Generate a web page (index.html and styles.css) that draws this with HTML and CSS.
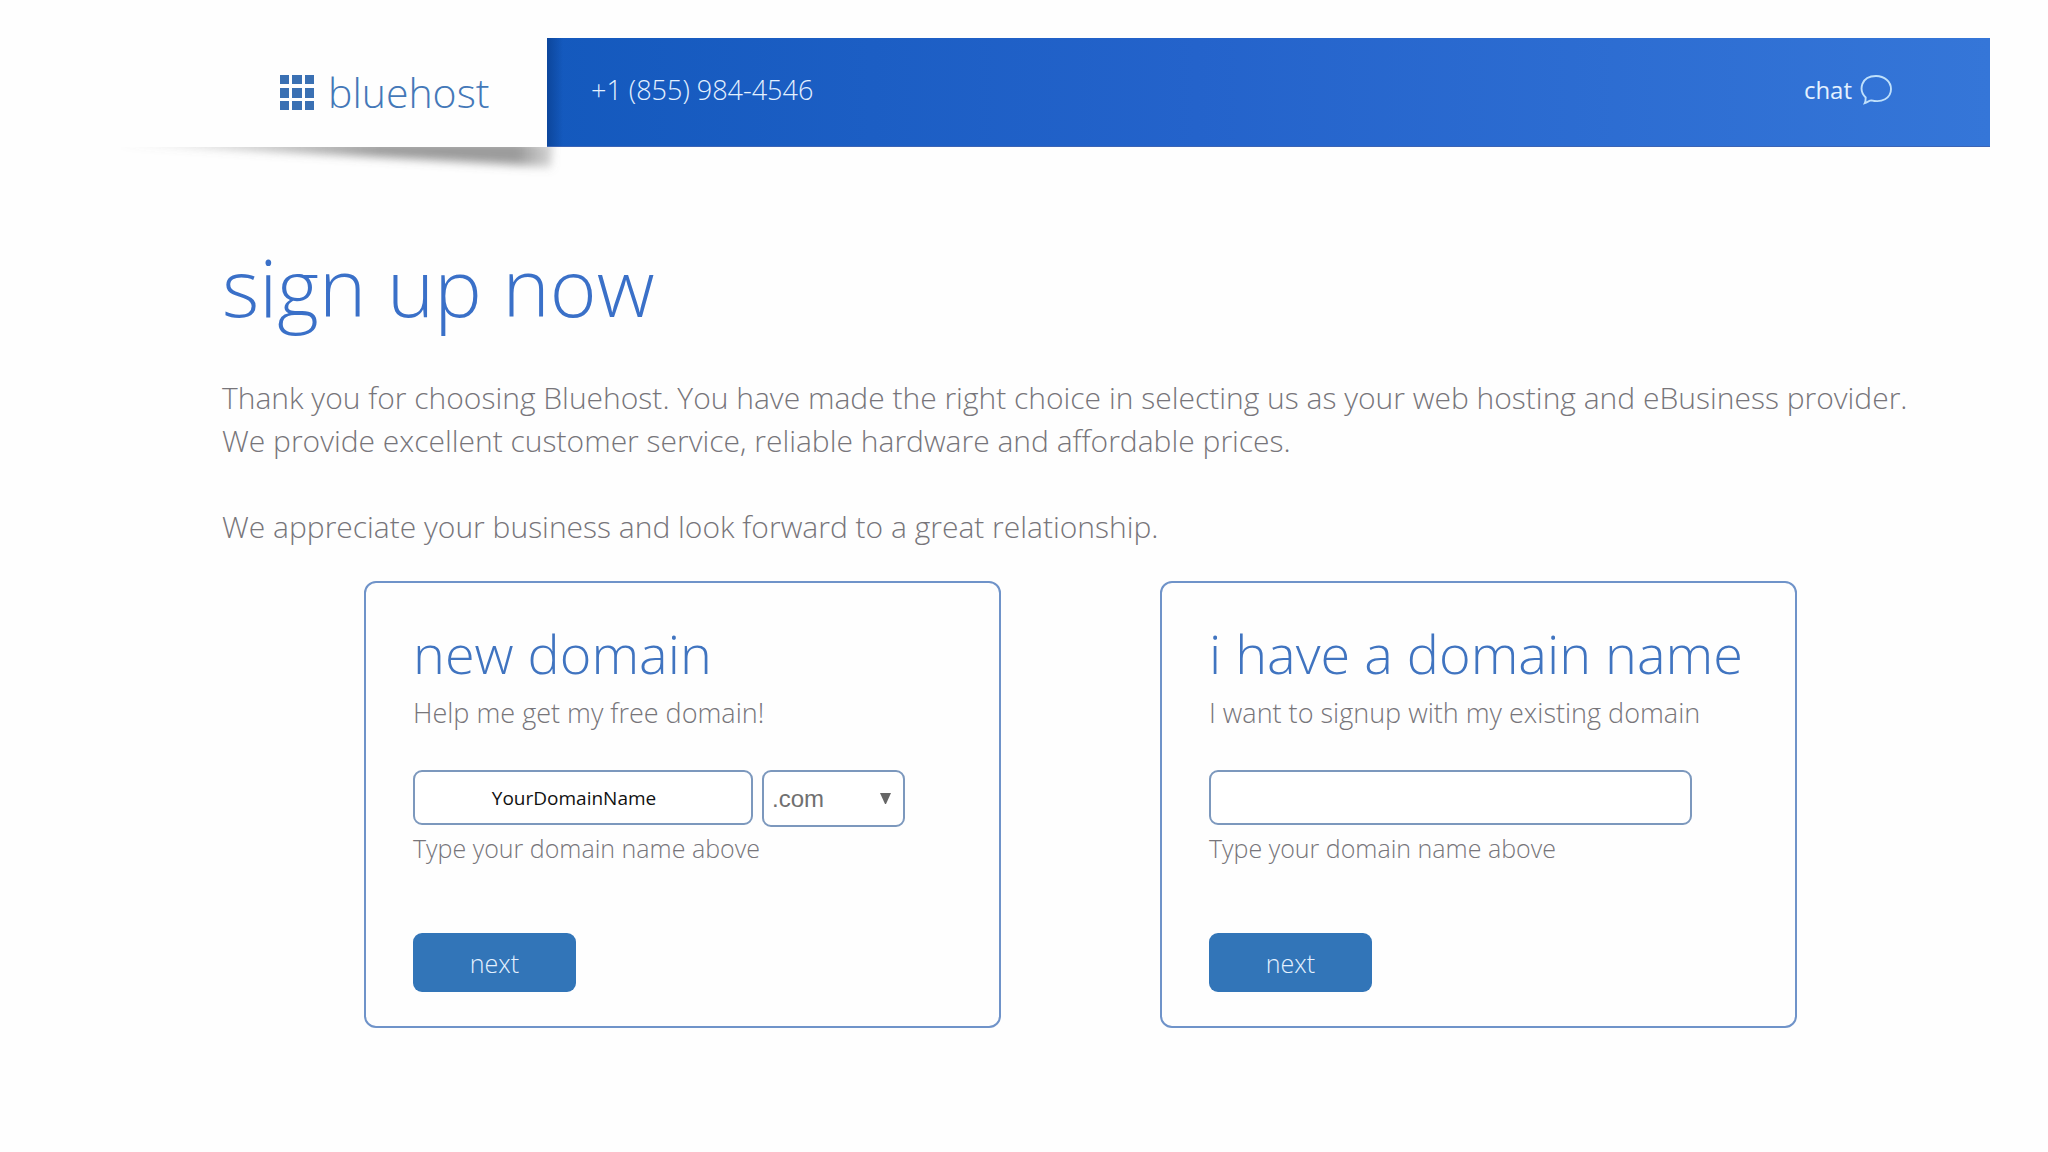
FILE: index.html
```html
<!DOCTYPE html>
<html lang="en">
<head>
<meta charset="utf-8">
<title>Bluehost - sign up now</title>
<meta name="viewport" content="width=device-width, initial-scale=1">
<link rel="stylesheet" href="styles.css">
</head>
<body>
<header class="site-header">
  <div class="brand">
    <a class="logo" href="#">
      <svg class="logo-grid" viewBox="0 0 34 35" aria-hidden="true">
        <path d="M0 0h9v9H0zM12 0h10v9H12zM25 0h9v9h-9zM0 13h9v10H0zM12 13h10v10H12zM25 13h9v10h-9zM0 26h9v9H0zM12 26h10v9H12zM25 26h9v9h-9z"/>
      </svg>
      <span class="logo-name">bluehost</span>
    </a>
    <svg class="brand-shadow" viewBox="0 0 440 36" preserveAspectRatio="none" aria-hidden="true">
      <defs>
        <linearGradient id="fade-x" x1="0" x2="1" y1="0" y2="0">
          <stop offset="0" stop-color="#777" stop-opacity="0.2"/>
          <stop offset="0.6" stop-color="#666" stop-opacity="0.65"/>
          <stop offset="0.92" stop-color="#666" stop-opacity="0.65"/>
          <stop offset="1" stop-color="#777" stop-opacity="0.3"/>
        </linearGradient>
        <filter id="soften" x="-10%" y="-50%" width="120%" height="200%">
          <feGaussianBlur stdDeviation="4 5"/>
        </filter>
      </defs>
      <path d="M-6 -5H432L430 20Z" fill="url(#fade-x)" filter="url(#soften)"/>
    </svg>
  </div>
  <div class="top-bar">
    <a class="phone" href="tel:+18559844546">+1 (855) 984-4546</a>
    <a class="chat" href="#">chat
      <svg class="chat-icon" viewBox="0 0 34 32" aria-hidden="true">
        <path d="M5 30C6 28 6 26 6 24C-2 16 1 1 17 1C26 1 33 7 33 15C33 25 23 30 12 27C10 27 8 29 5 30Z"/>
      </svg>
    </a>
  </div>
</header>
<main class="page">
  <h1 class="page-title">sign up now</h1>
  <div class="intro">
    <p>Thank you for choosing Bluehost. You have made the right choice in selecting us as your web hosting and eBusiness provider.<br>We provide excellent customer service, reliable hardware and affordable prices.</p>
    <p>We appreciate your business and look forward to a great relationship.</p>
  </div>
  <div class="cards">
    <form class="card">
      <h2 class="card-title">new domain</h2>
      <p class="card-lead">Help me get my free domain!</p>
      <div class="fields">
        <input class="field field-name" id="new-domain" type="text" value="YourDomainName">
        <select class="field field-tld" aria-label="Domain ending">
          <option>.com</option>
          <option>.net</option>
          <option>.org</option>
        </select>
      </div>
      <label class="hint" for="new-domain">Type your domain name above</label>
      <button class="next" type="button">next</button>
    </form>
    <form class="card">
      <h2 class="card-title">i have a domain name</h2>
      <p class="card-lead">I want to signup with my existing domain</p>
      <div class="fields">
        <input class="field field-existing" id="own-domain" type="text">
      </div>
      <label class="hint" for="own-domain">Type your domain name above</label>
      <button class="next" type="button">next</button>
    </form>
  </div>
</main>
</body>
</html>
```
FILE: styles.css
```css
* {
  box-sizing: border-box;
}

body {
  margin: 0;
  background: #fefefe;
  color: #77757a;
  font-family: "Open Sans", "Noto Sans", sans-serif;
  font-weight: 300;
}

h1,
h2,
p {
  margin: 0;
  font-weight: 300;
}

a {
  color: inherit;
  text-decoration: none;
}

.site-header {
  display: flex;
  height: 109px;
  margin: 38px 58px 0 0;
}

.brand {
  position: relative;
  flex: none;
  width: 547px;
  padding: 26px 0 0 280px;
}

.logo {
  display: flex;
  align-items: center;
  gap: 14px;
  height: 56px;
  color: #4478b8;
}

.logo-grid {
  width: 34px;
  height: 35px;
  fill: #3a70b3;
}

.logo-name {
  font-size: 41px;
  line-height: 56px;
}

.brand-shadow {
  position: absolute;
  top: 109px;
  right: -14px;
  width: 440px;
  height: 36px;
}

.top-bar {
  display: flex;
  flex: 1;
  align-items: center;
  justify-content: space-between;
  padding: 0 98px 4px 44px;
  border-bottom: 1px solid #3c64b4;
  background:
    linear-gradient(90deg, #0c469c, transparent 16px),
    linear-gradient(90deg, #1459bd, #2463cb 45%, #3576d8);
  color: #e4f1ff;
  font-size: 27px;
  line-height: 36px;
}

.chat {
  display: flex;
  align-items: center;
  gap: 8px;
  font-size: 24px;
  font-weight: 400;
}

.chat-icon {
  width: 32px;
  height: 30px;
  fill: none;
  stroke: #bfe0fb;
  stroke-width: 2;
}

.page {
  padding: 87px 120px 0 222px;
}

.page-title {
  color: #3a70c8;
  font-size: 80px;
  line-height: 104px;
}

.intro {
  display: grid;
  gap: 43px;
  margin-top: 38px;
  font-size: 30px;
  line-height: 43px;
}

.cards {
  display: grid;
  grid-template-columns: 1fr 1fr;
  gap: 159px;
  margin-top: 33px;
  padding: 0 131px 40px 142px;
}

.card {
  display: flex;
  flex-direction: column;
  align-items: flex-start;
  padding: 34px 24px 34px 47px;
  border: 2px solid #6f93c9;
  border-radius: 12px;
}

.card-title {
  color: #4074c0;
  font-size: 54px;
  line-height: 72px;
  white-space: nowrap;
}

.card-lead {
  margin-top: 4px;
  font-size: 27px;
  line-height: 40px;
}

.fields {
  display: flex;
  gap: 9px;
  height: 57px;
  margin-top: 37px;
}

.field {
  height: 55px;
  padding: 0;
  border: 2px solid #7c98bd;
  border-radius: 9px;
  background: #fff;
}

.field-name {
  width: 340px;
  padding-right: 18px;
  color: #111;
  font-family: "Open Sans", sans-serif;
  font-size: 19px;
  text-align: center;
}

.field-existing {
  width: 483px;
  padding: 0 16px;
  font-size: 19px;
}

.field-tld {
  width: 143px;
  height: 57px;
  padding: 0 12px 0 8px;
  appearance: none;
  background: url("data:image/svg+xml,%3Csvg xmlns='http://www.w3.org/2000/svg' width='11' height='11'%3E%3Cpath d='M0 0H11L6 11H5Z' fill='%23666'/%3E%3C/svg%3E") right 12px center no-repeat #fff;
  color: #707070;
  font-family: "Liberation Sans", Arial, sans-serif;
  font-size: 24px;
}

.hint {
  margin-top: 1px;
  font-size: 25px;
  line-height: 40px;
}

.next {
  width: 163px;
  height: 59px;
  margin-top: 65px;
  border: 0;
  border-radius: 9px;
  background: #3275b8;
  color: #e4f1ff;
  font-family: "Open Sans", sans-serif;
  font-size: 25px;
  font-weight: 300;
}
```
